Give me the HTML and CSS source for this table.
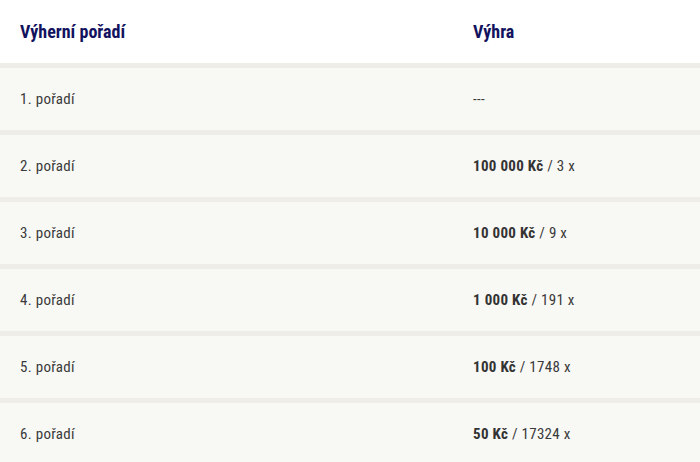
FILE: index.html
```html
<!DOCTYPE html>
<html lang="cs">
<head>
<meta charset="utf-8">
<link rel="stylesheet" href="styles.css">
</head>
<body>
<div class="table">
  <div class="row head">
    <div class="cell">Výherní pořadí</div>
    <div class="cell">Výhra</div>
  </div>
  <div class="row">
    <div class="cell">1. pořadí</div>
    <div class="cell">---</div>
  </div>
  <div class="row">
    <div class="cell">2. pořadí</div>
    <div class="cell"><b>100 000 Kč</b> / 3 x</div>
  </div>
  <div class="row">
    <div class="cell">3. pořadí</div>
    <div class="cell"><b>10 000 Kč</b> / 9 x</div>
  </div>
  <div class="row">
    <div class="cell">4. pořadí</div>
    <div class="cell"><b>1 000 Kč</b> / 191 x</div>
  </div>
  <div class="row">
    <div class="cell">5. pořadí</div>
    <div class="cell"><b>100 Kč</b> / 1748 x</div>
  </div>
  <div class="row">
    <div class="cell">6. pořadí</div>
    <div class="cell"><b>50 Kč</b> / 17324 x</div>
  </div>
</div>
</body>
</html>
```
FILE: styles.css
```css
html, body {
  margin: 0;
  padding: 0;
  background: #f8f8f5;
}
body {
  font-family: "Roboto Condensed", "Roboto", "Liberation Sans Narrow", sans-serif;
  font-stretch: 82%;
  color: #3a3a3a;
  font-size: 15px;
  letter-spacing: 0.3px;
}
.table {
  display: flex;
  flex-direction: column;
}
.row {
  display: grid;
  grid-template-columns: 453px 1fr;
  padding: 0 20px;
  height: 62px;
  align-items: center;
  background: #f8f8f5;
  border-top: 5px solid #eeede7;
}
.row.head {
  height: 63px;
  border-top: 0;
  background: #ffffff;
  color: #12125e;
  font-weight: 700;
  font-size: 18px;
  letter-spacing: 0;
}
b {
  font-weight: 700;
  color: #333333;
}
```
